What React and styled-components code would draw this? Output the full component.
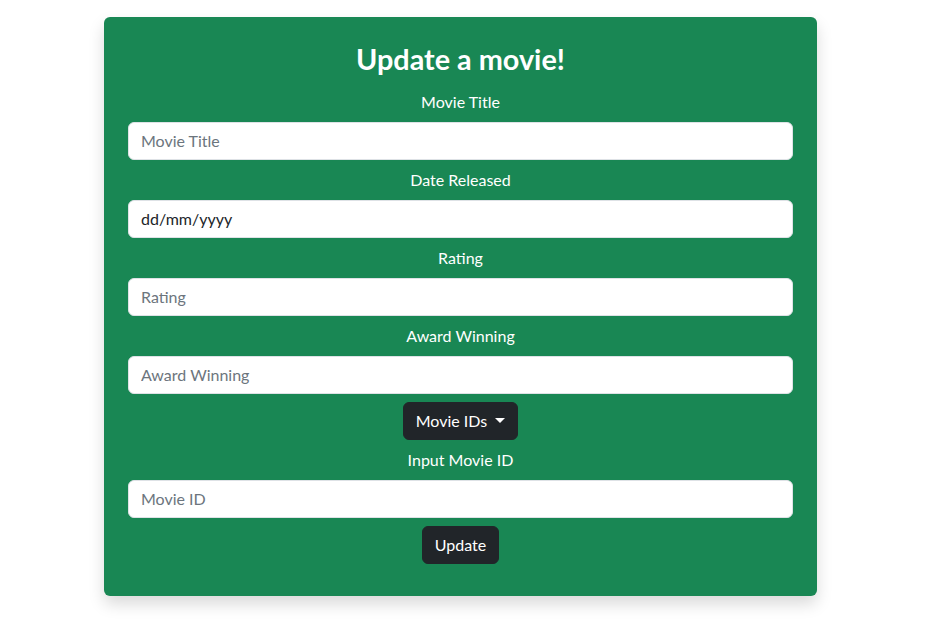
import React from "react";
import styled, { createGlobalStyle } from "styled-components";

const Global = createGlobalStyle`
  html, body { margin: 0; padding: 0; background: #fff; }
  body { font-family: "Segoe UI", Lato, "Noto Sans", sans-serif; font-size: 16px; line-height: 1.5; color: #212529; }
  * { box-sizing: border-box; }
`;

const Page = styled.div`
  padding: 17px 0 26px 104px;
`;

const Card = styled.form`
  width: 713px;
  background: #198754;
  border-radius: 6px;
  box-shadow: 0 8px 16px rgba(0, 0, 0, 0.15);
  padding: 25px 24px 24px;
  display: flex;
  flex-direction: column;
  align-items: center;
  color: #fff;
`;

const Title = styled.h2`
  margin: 0 0 13px;
  font-size: 28.8px;
  font-weight: 700;
  line-height: 1.2;
`;

const Label = styled.label`
  display: block;
  margin-bottom: 8px;
  font-size: 16px;
  line-height: 24px;
`;

const Input = styled.input`
  width: 100%;
  height: 38px;
  margin-bottom: 8px;
  padding: 6px 12px;
  font: inherit;
  font-size: 16px;
  color: #212529;
  background: #fff;
  border: 1px solid #dee2e6;
  border-radius: 6px;
  outline: none;
  &::placeholder { color: #6c757d; }
`;

const DarkButton = styled.button`
  display: inline-flex;
  align-items: center;
  height: 38px;
  margin-bottom: 8px;
  padding: 6px 12px;
  font: inherit;
  font-size: 16px;
  color: #fff;
  background: #212529;
  border: 1px solid #212529;
  border-radius: 6px;
  cursor: pointer;
`;

const Caret = styled.span`
  display: inline-block;
  margin-left: 8px;
  width: 0;
  height: 0;
  border-top: 5px solid #fff;
  border-left: 5px solid transparent;
  border-right: 5px solid transparent;
`;

const fields = [
  { label: "Movie Title", placeholder: "Movie Title" },
  { label: "Date Released", value: "dd/mm/yyyy" },
  { label: "Rating", placeholder: "Rating" },
  { label: "Award Winning", placeholder: "Award Winning" },
];

export default function App() {
  return (
    <>
      <Global />
      <Page>
        <Card onSubmit={(e) => e.preventDefault()}>
          <Title>Update a movie!</Title>
          {fields.map((f) => (
            <React.Fragment key={f.label}>
              <Label>{f.label}</Label>
              {f.value ? (
                <Input type="text" defaultValue={f.value} />
              ) : (
                <Input type="text" placeholder={f.placeholder} />
              )}
            </React.Fragment>
          ))}
          <DarkButton type="button">
            Movie IDs
            <Caret />
          </DarkButton>
          <Label>Input Movie ID</Label>
          <Input type="text" placeholder="Movie ID" />
          <DarkButton type="submit">Update</DarkButton>
        </Card>
      </Page>
    </>
  );
}
